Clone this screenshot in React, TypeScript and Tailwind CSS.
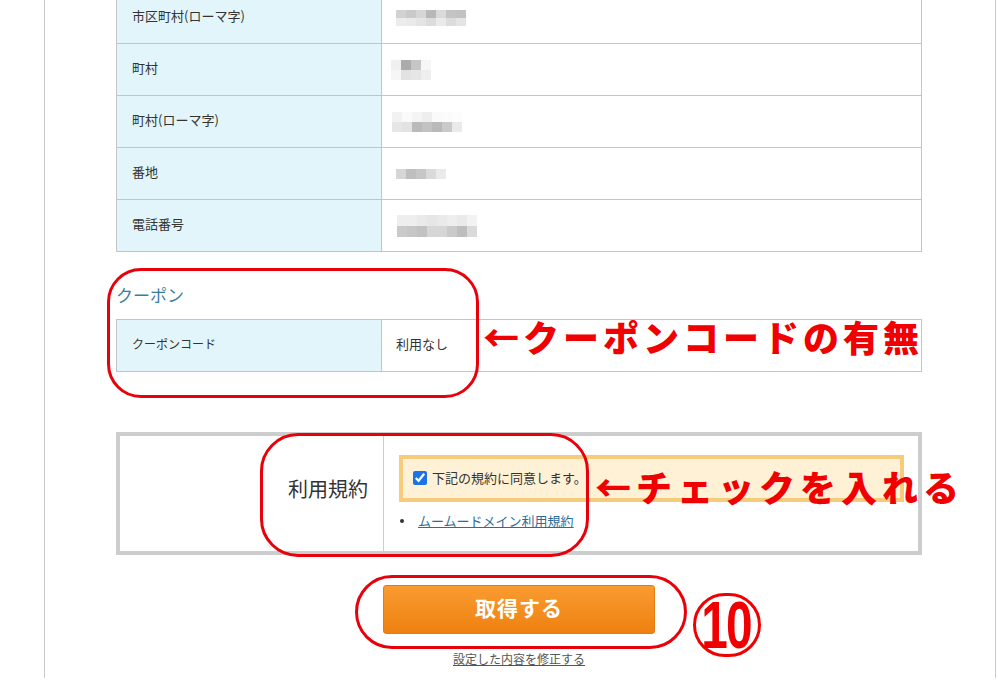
import React from "react";

const jp = { fontFamily: '"Noto Sans CJK JP", "Noto Sans", sans-serif' };

type Mosaic = { cols: number; w: number; h: number; shades: string[][] };

const rows: { label: string; mosaic: Mosaic; offset: string }[] = [
  {
    label: "市区町村(ローマ字)",
    offset: "ml-[14px] mt-[0px]",
    mosaic: {
      cols: 7,
      w: 10,
      h: 8,
      shades: [
        ["#d2d2d2", "#cacaca", "#d6d6d6", "#b8b8b8", "#dadada", "#c4c4c4", "#c2c2c2"],
        ["#ececec", "#eaeaea", "#e4e4e4", "#dcdcdc", "#eaeaea", "#dcdcdc", "#e4e4e4"],
      ],
    },
  },
  {
    label: "町村",
    offset: "ml-[9px]",
    mosaic: {
      cols: 4,
      w: 10,
      h: 10,
      shades: [
        ["#f0f0f0", "#ababab", "#c6c6c6", "#f6f6f6"],
        ["#f6f6f6", "#e2e2e2", "#e6e6e6", "#eeeeee"],
      ],
    },
  },
  {
    label: "町村(ローマ字)",
    offset: "ml-[10px]",
    mosaic: {
      cols: 7,
      w: 10,
      h: 10,
      shades: [
        ["#f2f2f2", "#fafafa", "#f4f4f4", "#eeeeee", "#fafafa", "#fbfbfb", "#fdfdfd"],
        ["#e6e6e6", "#e2e2e2", "#bababa", "#c2c2c2", "#bababa", "#cacaca", "#eaeaea"],
      ],
    },
  },
  {
    label: "番地",
    offset: "ml-[14px]",
    mosaic: {
      cols: 5,
      w: 10,
      h: 10,
      shades: [["#d6d6d6", "#bebebe", "#c6c6c6", "#dadada", "#eaeaea"]],
    },
  },
  {
    label: "電話番号",
    offset: "ml-[15px]",
    mosaic: {
      cols: 8,
      w: 10,
      h: 11,
      shades: [
        ["#eeeeee", "#eeeeee", "#eaeaea", "#e6e6e6", "#eaeaea", "#eeeeee", "#eaeaea", "#f2f2f2"],
        ["#cacaca", "#c6c6c6", "#c2c2c2", "#d6d6d6", "#d6d6d6", "#cacaca", "#bebebe", "#dadada"],
      ],
    },
  },
];

function Blur({ m, className }: { m: Mosaic; className: string }) {
  return (
    <div className={`flex flex-col blur-[0.6px] ${className}`}>
      {m.shades.map((line, i) => (
        <div key={i} className="flex">
          {line.map((c, j) => (
            <div key={j} style={{ width: m.w, height: m.h, background: c }} />
          ))}
        </div>
      ))}
    </div>
  );
}

function Ring({ className }: { className: string }) {
  return (
    <div
      className={`absolute border-[3px] border-[#e8000b] pointer-events-none ${className}`}
    />
  );
}

export default function App() {
  return (
    <div
      className="relative w-[998px] h-[687px] overflow-hidden bg-white text-[#333]"
      style={jp}
    >
      <div className="ml-[44px] w-[952px] h-[687px] border-l border-r border-[#c9c9c9]">
        <div className="ml-[71px] w-[806px]">
          {/* address table */}
          <div className="-mt-[9px] border-t border-[#c4c4c4]">
            {rows.map((r) => (
              <div key={r.label} className="flex h-[52px] border-b border-[#c4c4c4]">
                <div className="w-[266px] shrink-0 flex items-center pl-[15px] pb-[3px] bg-[#e2f5fa] border-l border-r border-[#c4c4c4] text-[13px]">
                  {r.label}
                </div>
                <div className="flex-1 flex items-center border-r border-[#c4c4c4]">
                  <Blur m={r.mosaic} className={r.offset} />
                </div>
              </div>
            ))}
          </div>

          {/* coupon */}
          <div className="mt-[31px] mb-[12px] h-[24px] leading-[24px] text-[17px] text-[#3a7fa3]">
            クーポン
          </div>
          <div className="flex h-[53px] border-t border-b border-[#c4c4c4]">
            <div className="w-[266px] shrink-0 flex items-center pl-[15px] pb-[3px] bg-[#e2f5fa] border-l border-r border-[#c4c4c4] text-[12px]">
              クーポンコード
            </div>
            <div className="flex-1 flex items-center pl-[14px] pb-[3px] border-r border-[#c4c4c4] text-[13px]">
              利用なし
            </div>
          </div>

          {/* terms */}
          <div className="mt-[60px] flex h-[123px] border-4 border-[#cdcdcd]">
            <div className="w-[264px] shrink-0 flex items-center justify-end pr-[15px] pb-[10px] border-r border-[#cdcdcd] text-[20px]">
              利用規約
            </div>
            <div className="flex-1 pt-[19px] pl-[15px] pr-[14px]">
              <div className="h-[47px] border-4 border-[#f6cb7c] bg-[#fff1d5] flex items-center pl-[10px] pb-[2px]">
                <input
                  type="checkbox"
                  defaultChecked
                  className="w-[14px] h-[14px] accent-[#1a73e8]"
                />
                <span className="ml-[5px] text-[13px]">下記の規約に同意します。</span>
              </div>
              <ul className="mt-[9px] flex items-center text-[13px]">
                <li className="flex items-center">
                  <span className="w-[4px] h-[4px] rounded-full bg-[#333] ml-[1px] mr-[14px]" />
                  <a className="underline text-[#2b6c9c]">ムームードメイン利用規約</a>
                </li>
              </ul>
            </div>
          </div>

          {/* submit */}
          <div className="mt-[30px] flex flex-col items-center">
            <button
              className="w-[272px] h-[49px] pb-[3px] rounded-[3px] border border-[#e57c12] bg-gradient-to-b from-[#f99b2f] to-[#ef810e] text-white text-[21px] font-bold tracking-[1px]"
              style={jp}
            >
              取得する
            </button>
            <a className="mt-[17px] text-[12px] leading-[16px] underline text-[#555]">
              設定した内容を修正する
            </a>
          </div>
        </div>
      </div>

      {/* annotations */}
      <Ring className="left-[107px] top-[268px] w-[372px] h-[130px] rounded-[34px]" />
      <Ring className="left-[260px] top-[433px] w-[329px] h-[124px] rounded-[38px]" />
      <Ring className="left-[355px] top-[575px] w-[332px] h-[74px] rounded-full" />

      <div className="absolute left-[483px] top-[318px] text-[36px] leading-none font-black tracking-[4px] text-[#f00000] whitespace-nowrap">
        ←クーポンコードの有無
      </div>
      <div className="absolute left-[595px] top-[468px] text-[36px] leading-none font-black tracking-[5px] text-[#f00000] whitespace-nowrap">
        ←チェックを入れる
      </div>

      <div className="absolute left-[693px] top-[593px] w-[68px] h-[64px] rounded-full border-[3px] border-[#f00000] flex items-center justify-center">
        <span
          className="block text-[#f00000] text-[52px] leading-none font-bold tracking-[-2px] pr-[2px] scale-x-[0.92] scale-y-[1.3]"
          style={{ fontFamily: '"Liberation Sans", Arial, sans-serif' }}
        >
          10
        </span>
      </div>
    </div>
  );
}
